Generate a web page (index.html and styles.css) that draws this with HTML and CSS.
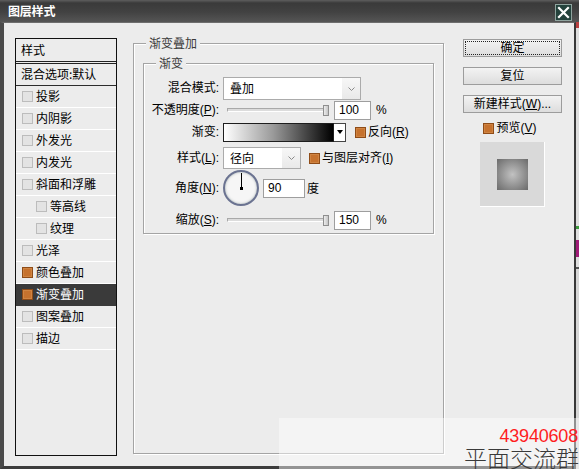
FILE: index.html
```html
<!DOCTYPE html>
<html lang="zh-CN">
<head>
<meta charset="utf-8">
<title>图层样式</title>
<link rel="stylesheet" href="styles.css">
</head>
<body>
<div class="win">
  <div class="titlebar">
    <span class="title">图层样式</span>
    <span class="close">
      <svg width="17" height="17" viewBox="0 0 17 17">
        <rect x="0.5" y="0.5" width="16" height="16" fill="#24423c" stroke="#8fa39e"/>
        <path d="M4 4 L13 13 M13 4 L4 13" stroke="#fff" stroke-width="2.2" stroke-linecap="square"/>
      </svg>
    </span>
  </div>
  <div class="frame">
    <div class="dlg">
      <div class="list">
        <div class="list-head">样式</div>
        <div class="list-blend">混合选项:默认</div>
        <div class="item"><span class="cb"></span>投影</div>
        <div class="item"><span class="cb"></span>内阴影</div>
        <div class="item"><span class="cb"></span>外发光</div>
        <div class="item"><span class="cb"></span>内发光</div>
        <div class="item"><span class="cb"></span>斜面和浮雕</div>
        <div class="item sub"><span class="cb"></span>等高线</div>
        <div class="item sub"><span class="cb"></span>纹理</div>
        <div class="item"><span class="cb"></span>光泽</div>
        <div class="item"><span class="cb on"></span>颜色叠加</div>
        <div class="item sel"><span class="cb on"></span>渐变叠加</div>
        <div class="item"><span class="cb"></span>图案叠加</div>
        <div class="item"><span class="cb"></span>描边</div>
      </div>

      <div class="grp grp-outer">
        <span class="legend">渐变叠加</span>
        <div class="grp grp-inner">
          <span class="legend">渐变</span>
          <div class="row r1">
            <span class="lbl">混合模式:</span>
            <div class="select sel-wide"><span class="val">叠加</span><span class="arr"><svg width="7" height="4" viewBox="0 0 7 4"><path d="M0.5 0.5 L3.5 3.5 L6.5 0.5" fill="none" stroke="#8a8a8a"/></svg></span></div>
          </div>
          <div class="row r2">
            <span class="lbl">不透明度(<u>P</u>):</span>
            <div class="slider"><span class="track"></span><span class="thumb"></span></div>
            <span class="inp">100</span>
            <span class="unit">%</span>
          </div>
          <div class="row r3">
            <span class="lbl">渐变:</span>
            <span class="grad"></span>
            <span class="grad-arr"><span class="tri"></span></span>
            <span class="cb on cb-gap"></span>
            <span class="cbtext">反向(<u>R</u>)</span>
          </div>
          <div class="row r4">
            <span class="lbl">样式(<u>L</u>):</span>
            <div class="select sel-narrow"><span class="val">径向</span><span class="arr"><svg width="7" height="4" viewBox="0 0 7 4"><path d="M0.5 0.5 L3.5 3.5 L6.5 0.5" fill="none" stroke="#8a8a8a"/></svg></span></div>
            <span class="cb on cb-gap2"></span>
            <span class="cbtext">与图层对齐(<u>I</u>)</span>
          </div>
          <div class="row r5">
            <span class="lbl">角度(<u>N</u>):</span>
            <span class="dial"><span class="needle"></span><span class="dot"></span></span>
            <span class="inp inp-ang">90</span>
            <span class="unit2">度</span>
          </div>
          <div class="row r6">
            <span class="lbl">缩放(<u>S</u>):</span>
            <div class="slider"><span class="track"></span><span class="thumb"></span></div>
            <span class="inp">150</span>
            <span class="unit">%</span>
          </div>
        </div>
      </div>

      <div class="side">
        <div class="btn def">确定</div>
        <div class="btn">复位</div>
        <div class="btn">新建样式(<u>W</u>)...</div>
        <div class="pv-row"><span class="cb on"></span><span class="pv-text">预览(<u>V</u>)</span></div>
        <div class="preview"><span class="swatch"></span></div>
      </div>
    </div>
    <div class="outside"></div>
  </div>
  <div class="watermark">
    <div class="wm-num">43940608</div>
    <div class="wm-text">平面交流群</div>
  </div>
</div>
</body>
</html>
```

FILE: styles.css
```css
* { box-sizing: border-box; margin: 0; padding: 0; }
html, body { width: 579px; height: 469px; overflow: hidden; background: #e0e0e0; }
body { font: 12px/1.2 "Liberation Sans", "Noto Sans CJK SC", sans-serif; color: #000; }
u { text-decoration: underline; text-underline-offset: 1px; }

.win { width: 579px; height: 469px; display: flex; flex-direction: column; position: relative; }

.titlebar {
  height: 22px; flex: none; display: flex; align-items: center; justify-content: space-between;
  padding: 0 7px 0 8px;
  background: linear-gradient(#5e5e5e 0, #3a3a3a 3px, #424242 12px, #555 100%);
}
.title { color: #fff; font-weight: bold; font-size: 12px; letter-spacing: -0.2px; font-family: "Noto Sans CJK SC", sans-serif; line-height: 16px; }
.close { display: flex; width: 17px; height: 17px; margin-top: 3px; }

.frame { flex: 1; display: flex; }
.dlg {
  width: 576px; height: 100%; flex: none; display: flex; align-items: flex-start;
  background: #ececec; padding-left: 11px;
  border-left: 4px solid #4a4a4a; border-right: 2px solid #383838;
  border-bottom: 3px solid #3c3c3c; border-top: 1px solid #6e6e6e;
}
.outside {
  flex: 1;
  background: linear-gradient(#b84040 0 6px, #dedede 6px 204px, #3d9a3d 204px 207px, #dedede 207px 218px,
    #a01c78 218px 235px, #dedede 235px 245px, #555 245px 247px, #d6d6d6 247px);
}

/* left list */
.list {
  width: 102px; height: 418px; margin-top: 15px; flex: none;
  border: 1px solid #111; background: #ececec;
  font-family: "Noto Sans CJK SC", sans-serif;
}
.list-head { height: 25px; border-bottom: 3px double #222; padding: 1px 0 0 5px; display: flex; align-items: center; }
.list-blend { height: 22px; border-bottom: 1px solid #2c2c2c; padding-left: 5px; display: flex; align-items: center; }
.item { height: 22px; border-bottom: 1px solid #fff; padding-left: 6px; display: flex; align-items: center; }
.item.sub { padding-left: 20px; }
.item.sel { background: #3a3a3a; color: #fff; border-bottom-color: #3a3a3a; }
.item .cb { margin-right: 3px; }

.cb { width: 11px; height: 11px; flex: none; border: 1px solid #bcbcbc; background: #e3e3e3; display: inline-block; }
.cb.on { background: #c6722e; border-color: #8f4c18; box-shadow: inset 0 0 0 1px #cf8442; }

/* groups */
.grp { position: relative; border: 1px solid #a4a4a4; box-shadow: 1px 1px 0 #fff, inset 1px 1px 0 #fff; }
.grp-outer { width: 311px; height: 411px; margin-left: 16px; margin-top: 20px; flex: none; padding: 19px 9px 0 9px; }
.grp-inner { width: 291px; height: 171px; padding: 13px 0 0 0; }
.legend {
  position: absolute; top: -9px; left: 12px; padding: 0 3px; background: #ececec;
  line-height: 16px; color: #3a3a3a; font-family: "Noto Sans CJK SC", sans-serif;
}

.row { display: flex; align-items: center; }
.r1 { height: 23px; }
.r2 { height: 20px; }
.r3 { height: 20px; margin-top: 2px; }
.r4 { height: 22px; margin-top: 5px; }
.r5 { height: 36px; margin-top: 1px; }
.r6 { height: 20px; margin-top: 4px; }
.lbl { width: 75px; margin-right: 4px; text-align: right; white-space: nowrap; flex: none; }

.select { display: flex; border: 1px solid #ababab; background: #fff; font-family: "Noto Sans CJK SC", sans-serif; }
.sel-wide { width: 138px; height: 23px; }
.sel-narrow { width: 78px; height: 22px; }
.select .val { flex: 1; padding-left: 6px; display: flex; align-items: center; }
.select .arr { width: 18px; display: flex; align-items: center; justify-content: center; background: linear-gradient(#f7f7f7, #e9e9e9); }

.slider { position: relative; width: 102px; height: 11px; margin-left: 4px; display: flex; align-items: center; flex: none; }
.track { width: 100%; height: 4px; border: 1px solid #a9a9a9; border-bottom-color: #fff; border-right-color: #fff; background: #dcdcdc; }
.thumb { position: absolute; right: 0; top: 0; width: 6px; height: 11px; border: 1px solid #8e8e8e; background: linear-gradient(90deg, #ececec, #c6c6c6); }

.inp { width: 37px; height: 19px; margin-left: 5px; flex: none; border: 1px solid #9e9e9e; background: #fff; padding-left: 4px; display: flex; align-items: center; font-family: "Liberation Sans", sans-serif; }
.unit { margin-left: 5px; }
.inp-ang { width: 42px; margin-left: 4px; }
.unit2 { margin-left: 2px; font-family: "Noto Sans CJK SC", sans-serif; }

.grad { width: 111px; height: 19px; flex: none; border: 1px solid #1e1e1e; background: linear-gradient(90deg, #fff 0%, #9a9a9a 45%, #000 100%); }
.grad-arr { width: 12px; height: 19px; flex: none; border: 1px solid #444; border-left: none; background: #fff; display: flex; align-items: center; justify-content: center; }
.tri { width: 0; height: 0; border-left: 3px solid transparent; border-right: 3px solid transparent; border-top: 4px solid #000; }
.cb-gap { margin-left: 9px; }
.cb-gap2 { margin-left: 8px; }
.cbtext { margin-left: 2px; white-space: nowrap; }

.dial { position: relative; width: 36px; height: 36px; flex: none; border-radius: 50%; border: 2px solid #6b7391; background: radial-gradient(circle, #f6f6f6 55%, #dedede 100%); box-shadow: inset 0 0 2px #9aa; }
.needle { position: absolute; left: 16px; top: 1px; width: 1px; height: 15px; background: #000; }
.dot { position: absolute; left: 15px; top: 15px; width: 3px; height: 3px; background: #000; }

/* side */
.side { width: 99px; margin-left: 19px; margin-top: 16px; flex: none; display: flex; flex-direction: column; align-items: center; }
.btn {
  width: 99px; height: 18px; margin-bottom: 10px; border: 1px solid #9c9c9c;
  background: linear-gradient(#f3f3f3, #dddddd); display: flex; align-items: center; justify-content: center;
  white-space: nowrap;
}
.btn.def { outline: 1px dotted #222; outline-offset: -3px; }
.pv-row { height: 11px; display: flex; align-items: center; margin-left: -5px; }
.pv-text { margin-left: 2px; }
.preview { width: 65px; height: 65px; margin-top: 8px; background: #d9d9d9; border-right: 1px solid #fff; border-bottom: 1px solid #fff; display: flex; align-items: center; justify-content: center; }
.swatch { width: 31px; height: 31px; background: radial-gradient(circle at 50% 50%, #c2c2c2 0%, #9a9a9a 45%, #6a6a6a 100%); }

/* watermark */
.watermark {
  position: absolute; left: 279px; top: 418px; right: 0; bottom: 0;
  background: rgba(255, 255, 255, 0.45);
  display: flex; flex-direction: column; align-items: flex-end; padding-right: 1px;
}
.wm-num { margin-top: 10px; font: 18px/16px "Liberation Sans", sans-serif; color: #ff1d1d; letter-spacing: -0.2px; }
.wm-text { margin-top: 3px; margin-right: -1px; font: 300 23px/20px "Noto Sans CJK SC", sans-serif; color: #3a3a3a; white-space: nowrap; }
```
